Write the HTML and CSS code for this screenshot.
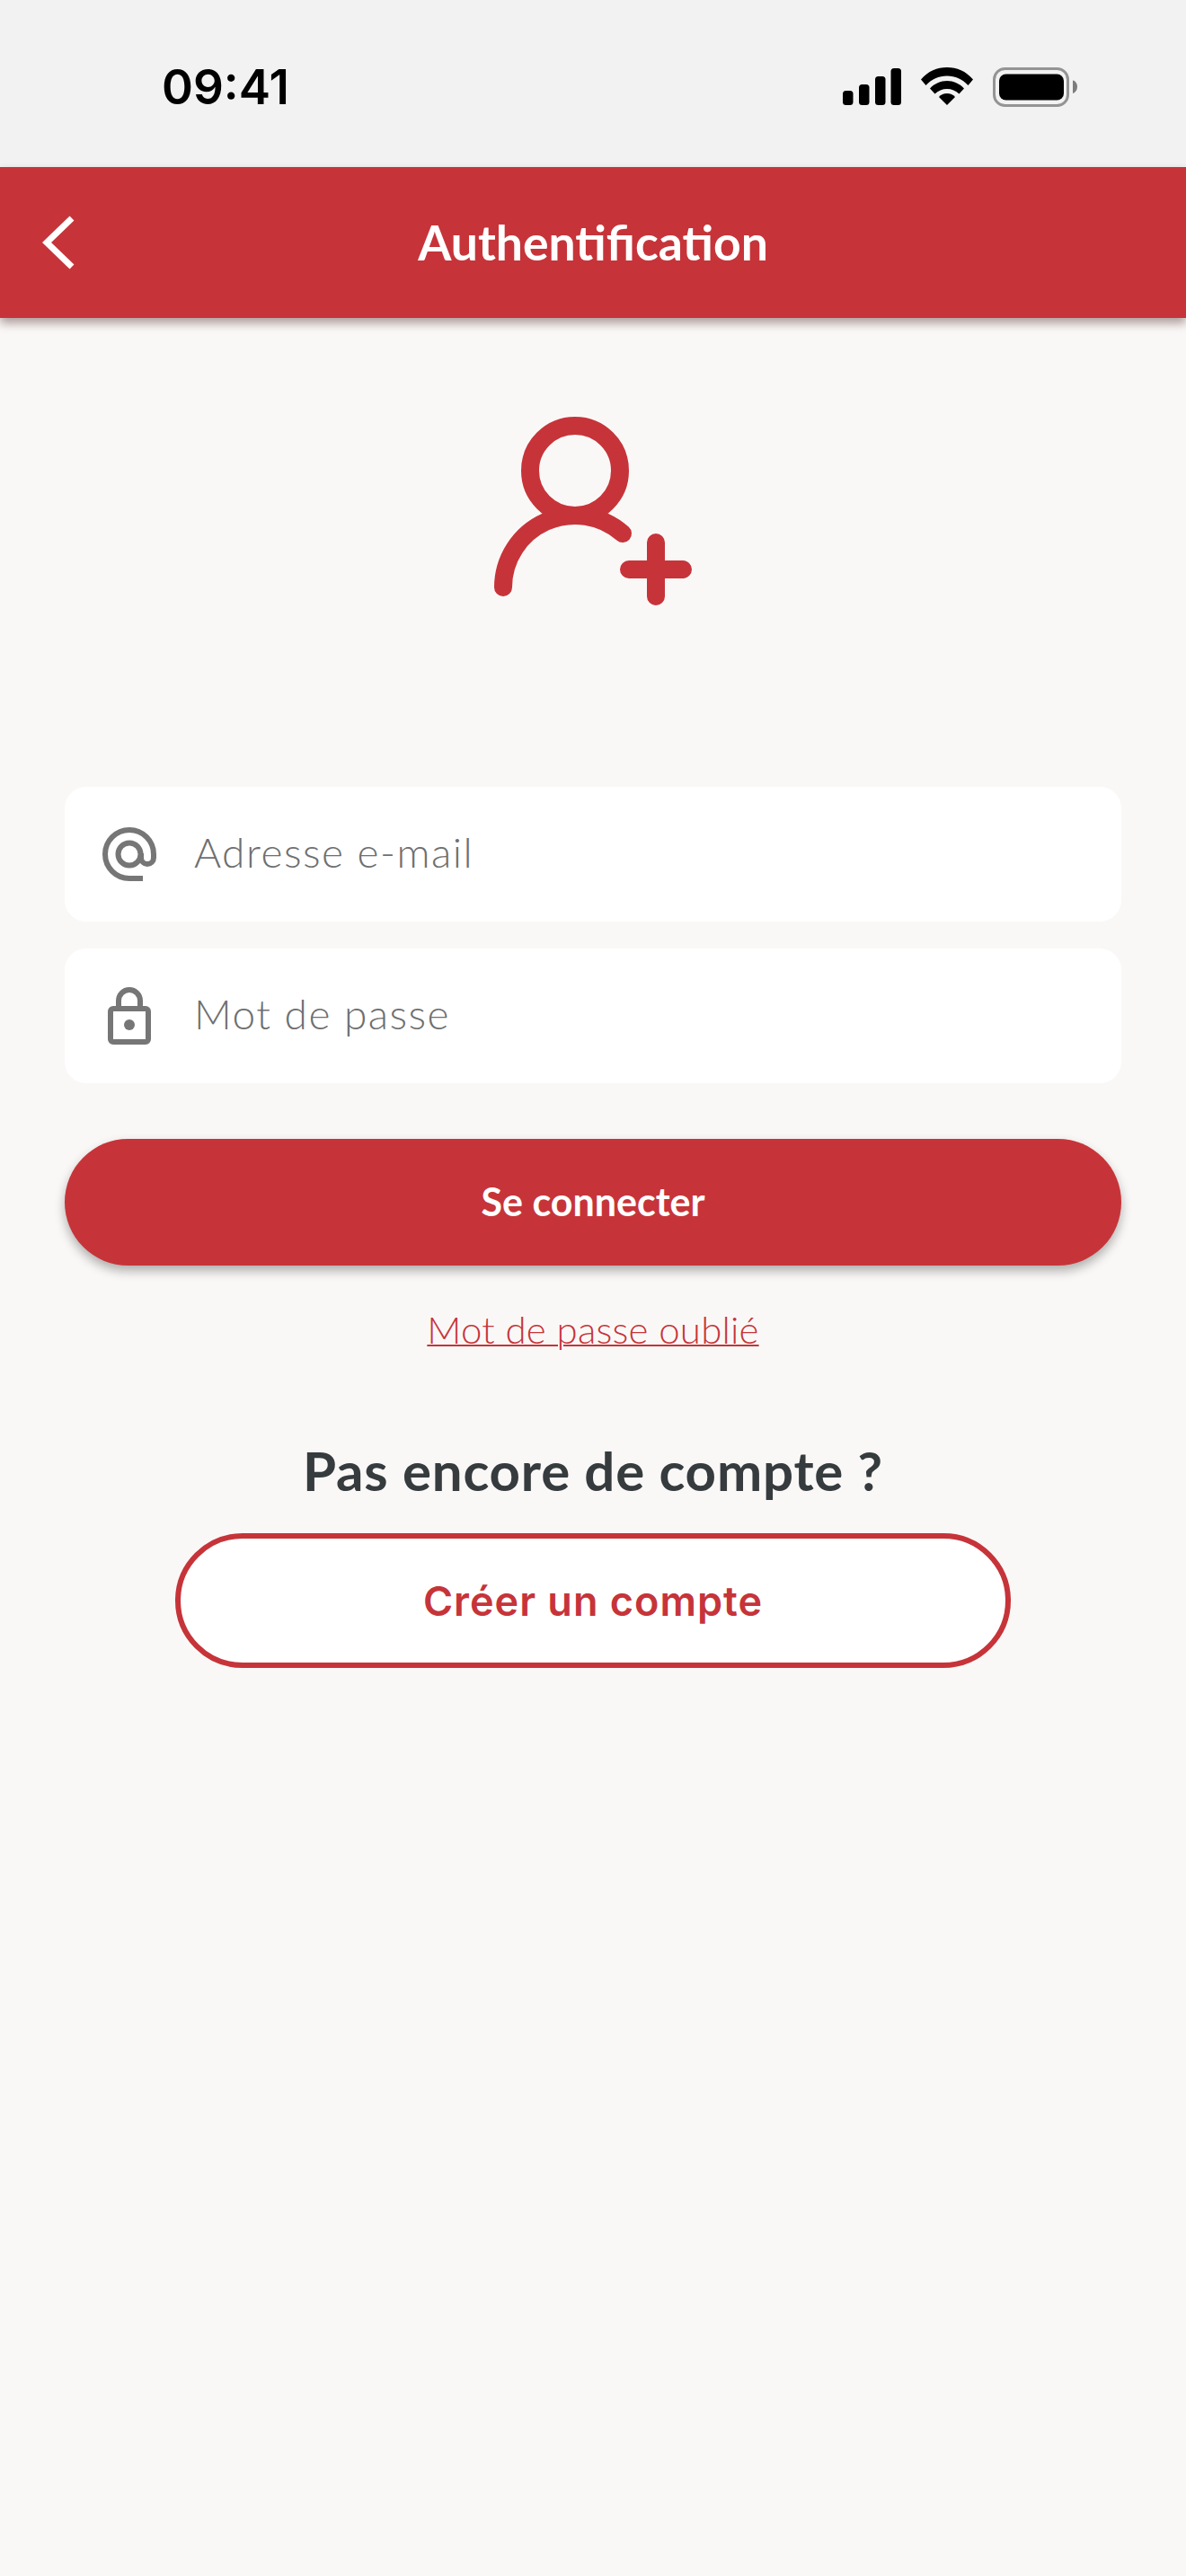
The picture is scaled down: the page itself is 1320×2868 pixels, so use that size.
FILE: index.html
```html
<!DOCTYPE html>
<html lang="fr">
<head>
<meta charset="utf-8">
<title>Authentification</title>
<link rel="stylesheet" href="styles.css">
</head>
<body>
<div class="screen">
  <div class="status">
    <span class="time">09:41</span>
    <div class="status-icons">
      <svg class="ic-signal" width="65" height="41" viewBox="0 0 65 41"><rect x="0" y="25" width="11.5" height="16" rx="3.5"/><rect x="18" y="18" width="11.5" height="23" rx="3.5"/><rect x="36" y="9" width="11.5" height="32" rx="3.5"/><rect x="53.5" y="0" width="11.5" height="41" rx="3.5"/></svg>
      <svg class="ic-wifi" width="58" height="42" viewBox="0 0 58 42"><path d="M29 0C18 0 8 4 0 13.500L5.500 20C11.500 13.500 20 9.500 29 9.500S46.500 13.500 52.500 20L58 13.500C50 4 40 0 29 0Z"/><path d="M29 15C22 15 15 18 10 23.500L15.500 29.500C19 26 24 24 29 24S39 26 42.500 29.500L48 23.500C43 18 36 15 29 15Z"/><path d="M29 29C25.500 29 22 30.500 20 33L29 42L38 33C36 30.500 32.500 29 29 29Z"/></svg>
      <svg class="ic-battery" width="94" height="44" viewBox="0 0 94 44"><rect x="1.500" y="1.500" width="82" height="41" rx="12" fill="none" stroke="#949494" stroke-width="3"/><rect x="7" y="7.500" width="72" height="29" rx="7.500"/><path d="M89 14.500C92 15 94 18 94 21.500S92 28 89 29Z" fill="#7d7d7d"/></svg>
    </div>
  </div>
  <header class="topbar">
    <svg class="back" width="36" height="60" viewBox="0 0 36 60"><path d="M33 3L5 30L33 57" fill="none" stroke="#fff" stroke-width="7"/></svg>
    <h1 class="title">Authentification</h1>
  </header>
  <main class="content">
    <svg class="hero" width="240" height="210" viewBox="0 0 240 210"><g fill="none" stroke="#c63439" stroke-width="20" stroke-linecap="round"><circle cx="100" cy="60" r="50"/><path d="M20 190A80 80 0 0 1 153 130"/><path d="M160 170H220M190 140V200"/></g></svg>
    <div class="field">
      <svg class="f-icon" width="60" height="60" viewBox="0 0 60 60"><g fill="none" stroke="#767676" stroke-width="6"><circle cx="30" cy="30" r="12.500"/><path d="M45 57H30A27 27 0 1 1 57 30V34A7 7 0 0 1 43 34V29"/></g></svg>
      <span class="placeholder">Adresse e-mail</span>
    </div>
    <div class="field">
      <svg class="f-icon" width="60" height="64" viewBox="0 0 60 64"><g fill="none" stroke="#767676" stroke-width="6"><rect x="9" y="24" width="42" height="37" rx="3"/><path d="M18 24V15A12 12 0 0 1 42 15V24"/></g><circle cx="30" cy="42" r="6" fill="#767676"/></svg>
      <span class="placeholder">Mot de passe</span>
    </div>
    <button class="btn-primary">Se connecter</button>
    <a class="forgot" href="#">Mot de passe oublié</a>
    <h2 class="prompt">Pas encore de compte ?</h2>
    <button class="btn-outline">Créer un compte</button>
  </main>
</div>
</body>
</html>
```
FILE: styles.css
```css
* { box-sizing: border-box; }
html, body { margin: 0; padding: 0; }
body { background: #faf8f7; font-family: "Lato", "Liberation Sans", sans-serif; }
.screen { width: 1320px; height: 2868px; overflow: hidden; background: #faf8f7; display: flex; flex-direction: column; }

.status { height: 186px; flex: none; background: #f2f2f2; display: flex; justify-content: space-between; align-items: flex-start; padding: 75px 121px 0 180px; }
.time { font-family: "Inter", sans-serif; font-weight: 600; font-size: 53px; line-height: 44px; color: #000; }
.status-icons { display: flex; align-items: flex-start; gap: 22px; }
.status-icons svg { display: block; flex: none; }
.ic-signal { margin-top: 1px; }

.topbar { height: 168px; flex: none; background: #c63439; box-shadow: 0 6px 10px rgba(60, 20, 20, .4); display: flex; align-items: center; justify-content: center; position: relative; }
.back { position: absolute; left: 47px; top: 54px; }
.title { margin: 0 0 3px; color: #fff; font-size: 53.5px; font-weight: 700; line-height: 60px; }

.content { padding: 110px 72px 0; display: flex; flex-direction: column; align-items: stretch; }
.hero { align-self: center; flex: none; margin: 0 0 202px; }
.field { height: 150px; background: #fff; border-radius: 24px; display: flex; align-items: center; gap: 42px; padding-left: 42px; margin-bottom: 30px; }
.f-icon { flex: none; display: block; }
.placeholder { font-size: 46px; font-weight: 300; letter-spacing: 1.5px; color: #6f6f6f; line-height: 56px; margin-top: -4px; }

.btn-primary { height: 141px; margin-top: 32px; padding-bottom: 4px; border: 0; border-radius: 71px; background: #c63439; color: #fff; font-family: "Lato", sans-serif; font-weight: 700; font-size: 43px; box-shadow: 0 6px 12px rgba(0, 0, 0, .3); }
.forgot { align-self: center; margin-top: 47px; font-size: 42px; font-weight: 300; letter-spacing: .2px; line-height: 48px; color: #c63439; text-decoration: underline; text-decoration-thickness: 2px; }
.prompt { margin: 99px 0 0; text-align: center; font-size: 60px; font-weight: 700; letter-spacing: .8px; line-height: 68px; color: #363b3e; }
.btn-outline { width: 930px; height: 150px; align-self: center; margin-top: 36px; border: 6px solid #c63439; border-radius: 75px; background: #fff; color: #c63439; font-family: "Inter", sans-serif; font-weight: 600; font-size: 45px; letter-spacing: 1px; }
```
